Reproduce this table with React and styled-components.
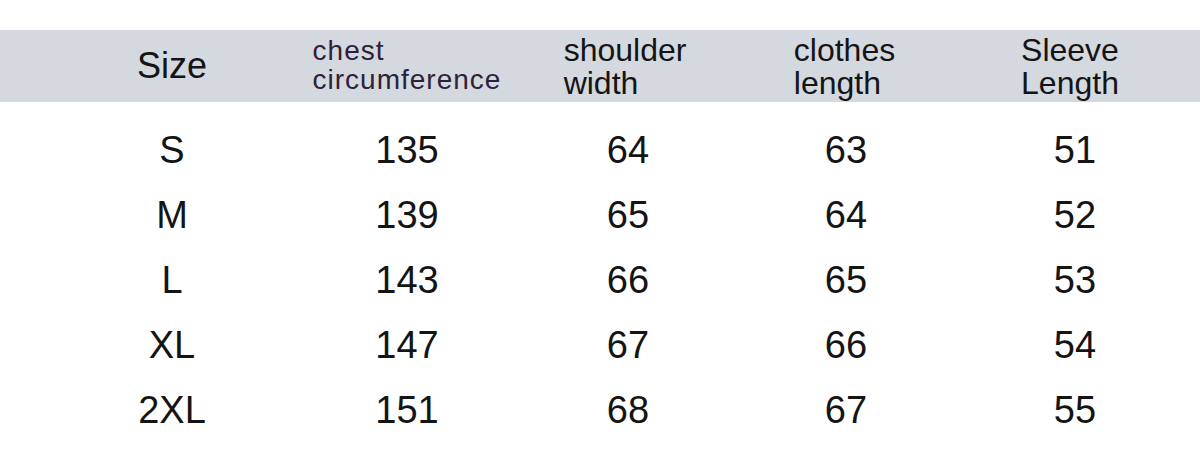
import React from "react";
import styled, { createGlobalStyle } from "styled-components";

const Global = createGlobalStyle`
  html, body { margin: 0; padding: 0; background: #fff; }
  body { font-family: "Liberation Sans", Arial, sans-serif; color: #111; }
`;

const Page = styled.div`
  width: 1200px;
  height: 466px;
  padding-top: 30px;
  box-sizing: border-box;
  background: #fff;
  overflow: hidden;
`;

const cols = "256px 214px 228px 208px 250px";

const HeaderBand = styled.div`
  display: grid;
  grid-template-columns: ${cols};
  padding-left: 44px;
  height: 72px;
  background: #d4d8df;
  align-items: center;
`;

const HeadCell = styled.div`
  justify-self: center;
  text-align: left;
  font-size: ${(p) => p.$size || 32}px;
  line-height: ${(p) => p.$lh || 33}px;
  letter-spacing: ${(p) => p.$ls || 0}px;
  color: ${(p) => p.$color || "#141414"};
  margin-left: ${(p) => p.$shift || 0}px;
  margin-top: ${(p) => p.$top || 0}px;
`;

const Body = styled.div`
  margin-top: 16px;
  display: flex;
  flex-direction: column;
`;

const Row = styled.div`
  display: grid;
  grid-template-columns: ${cols};
  padding-left: 44px;
  height: 65px;
  line-height: 65px;
  font-size: 38px;
  color: #141414;
`;

const Cell = styled.div`
  text-align: center;
`;

const rows = [
  ["S", 135, 64, 63, 51],
  ["M", 139, 65, 64, 52],
  ["L", 143, 66, 65, 53],
  ["XL", 147, 67, 66, 54],
  ["2XL", 151, 68, 67, 55],
];

export default function App() {
  return (
    <Page>
      <Global />
      <HeaderBand>
        <HeadCell $size={36} $lh={40}>Size</HeadCell>
        <HeadCell $size={28} $lh={29} $ls={1} $color="#2f2139" $top={-2}>
          chest
          <br />
          circumference
        </HeadCell>
        <HeadCell $shift={-6} $top={2}>
          shoulder
          <br />
          width
        </HeadCell>
        <HeadCell $shift={-3} $top={2}>
          clothes
          <br />
          length
        </HeadCell>
        <HeadCell $shift={-10} $top={2}>
          Sleeve
          <br />
          Length
        </HeadCell>
      </HeaderBand>
      <Body>
        {rows.map((r) => (
          <Row key={r[0]}>
            {r.map((v, i) => (
              <Cell key={i}>{v}</Cell>
            ))}
          </Row>
        ))}
      </Body>
    </Page>
  );
}
